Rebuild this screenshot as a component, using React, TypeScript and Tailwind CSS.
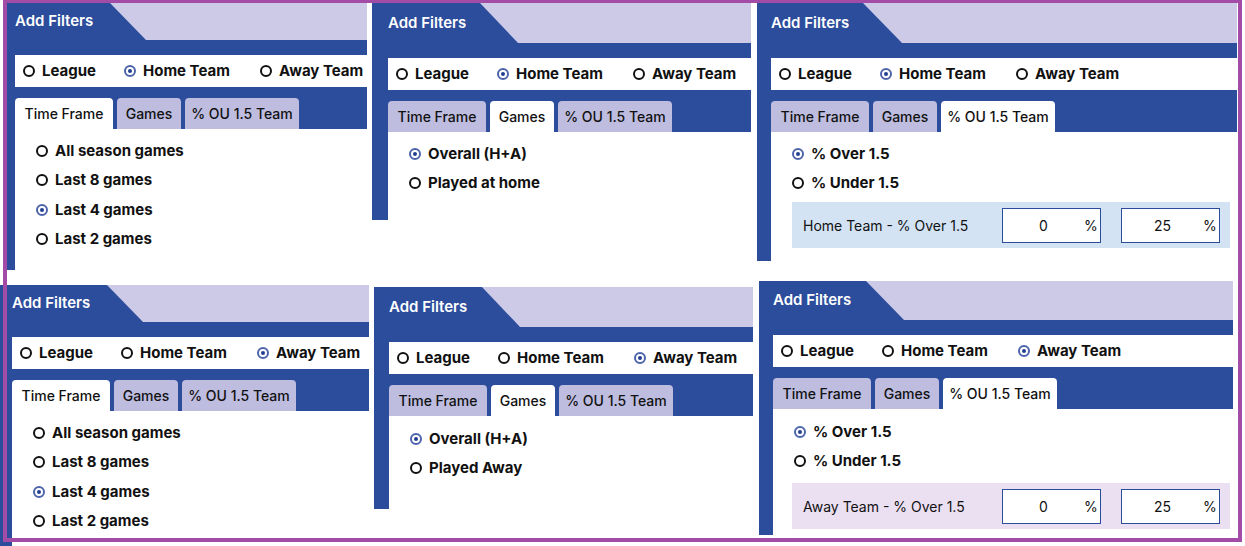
import React from "react";

type Team = "home" | "away";

type PanelConfig = {
  wrap: string;
  pad: string;
  headerH: string;
  tabShape: string;
  team: Team;
  activeTab: number;
  contentH: string;
  contentPt: string;
  options?: string[];
  bar?: { label: string; bg: string; mt: string; ml: string };
};

const TABS = [
  { label: "Time Frame", w: "w-[98px]" },
  { label: "Games", w: "w-[64px]" },
  { label: "% OU 1.5 Team", w: "w-[114px]" },
];

function Radio({ checked }: { checked?: boolean }) {
  if (checked) {
    return (
      <span className="flex h-[12px] w-[12px] shrink-0 items-center justify-center rounded-full border-2 border-[#4d64ad]">
        <span className="h-[4px] w-[4px] rounded-full bg-[#233f8f]" />
      </span>
    );
  }
  return (
    <span className="h-[12px] w-[12px] shrink-0 rounded-full border-2 border-[#111]" />
  );
}

function TeamRow({ team }: { team: Team }) {
  return (
    <div className="flex h-[32px] items-center bg-white pl-[8px] text-[15px] font-bold text-[#111]">
      <div className="flex w-[101px] items-center gap-[7px]">
        <Radio />
        <span>League</span>
      </div>
      <div className="flex w-[136px] items-center gap-[7px]">
        <Radio checked={team === "home"} />
        <span>Home Team</span>
      </div>
      <div className="flex items-center gap-[7px]">
        <Radio checked={team === "away"} />
        <span>Away Team</span>
      </div>
    </div>
  );
}

function PercentInput({ value }: { value: string }) {
  return (
    <div className="flex h-[35px] w-[99px] items-center border border-[#2c4c9c] bg-white text-[14px] text-[#111]">
      <span className="w-[81px] text-center">{value}</span>
      <span>%</span>
    </div>
  );
}

function Panel({ p }: { p: PanelConfig }) {
  return (
    <div className={`shrink-0 ${p.wrap}`}>
      {/* header with slanted tab */}
      <div className={`flex bg-[#cccae6] ${p.headerH}`}>
        <div
          className={`flex items-center bg-[#2c4c9c] text-[15px] font-semibold text-white ${p.pad} ${p.tabShape}`}
        >
          Add Filters
        </div>
      </div>

      <div className={`bg-[#2c4c9c] pt-[15px] ${p.pad}`}>
        <TeamRow team={p.team} />

        <div className="mt-[11px] flex gap-[4px]">
          {TABS.map((t, i) => (
            <div
              key={t.label}
              className={`flex h-[31px] items-center justify-center rounded-t-[4px] text-[14px] font-medium text-[#111] ${t.w} ${
                i === p.activeTab ? "bg-white" : "bg-[#bebde0]"
              }`}
            >
              {t.label}
            </div>
          ))}
        </div>

        <div className={`bg-white ${p.contentH} ${p.contentPt}`}>
          {p.options &&
            p.options.map((o, i) => (
              <div
                key={o}
                className="flex h-[29.5px] items-center gap-[7px] pl-[21px] text-[15px] font-bold text-[#111]"
              >
                <Radio checked={p.activeTab === 0 ? i === 2 : i === 0} />
                <span>{o}</span>
              </div>
            ))}

          {p.bar && (
            <div
              className={`flex h-[46px] w-[438px] items-center pl-[11px] pr-[10px] ${p.bar.bg} ${p.bar.mt} ${p.bar.ml}`}
            >
              <span className="text-[14px] text-[#111]">{p.bar.label}</span>
              <div className="ml-auto flex gap-[20px]">
                <PercentInput value="0" />
                <PercentInput value="25" />
              </div>
            </div>
          )}
        </div>
      </div>
    </div>
  );
}

const timeFrame = ["All season games", "Last 8 games", "Last 4 games", "Last 2 games"];
const ou = ["% Over 1.5", "% Under 1.5"];

const topRow: PanelConfig[] = [
  {
    wrap: "w-[360px]",
    pad: "pl-[8px]",
    headerH: "h-[37px]",
    tabShape: "w-[139px] [clip-path:polygon(0_0,103px_0,139px_100%,0_100%)]",
    team: "home",
    activeTab: 0,
    contentH: "h-[141px]",
    contentPt: "pt-[7px]",
    options: timeFrame,
  },
  {
    wrap: "ml-[5px] w-[379px]",
    pad: "pl-[16px]",
    headerH: "h-[40px]",
    tabShape: "w-[146px] [clip-path:polygon(0_0,108px_0,146px_100%,0_100%)]",
    team: "home",
    activeTab: 1,
    contentH: "h-[88px]",
    contentPt: "pt-[7px]",
    options: ["Overall (H+A)", "Played at home"],
  },
  {
    wrap: "ml-[6px] w-[480px]",
    pad: "pl-[14px]",
    headerH: "h-[40px]",
    tabShape: "w-[145px] [clip-path:polygon(0_0,106px_0,145px_100%,0_100%)]",
    team: "home",
    activeTab: 2,
    contentH: "h-[129px]",
    contentPt: "pt-[7px]",
    options: ou,
    bar: { label: "Home Team - % Over 1.5", bg: "bg-[#d3e3f4]", mt: "mt-[4px]", ml: "ml-[21px]" },
  },
];

const bottomRow: PanelConfig[] = [
  {
    wrap: "mt-[4px] w-[369px]",
    pad: "pl-[12px]",
    headerH: "h-[37px]",
    tabShape: "w-[143px] [clip-path:polygon(0_0,107px_0,143px_100%,0_100%)]",
    team: "away",
    activeTab: 0,
    contentH: "h-[140px]",
    contentPt: "pt-[7px]",
    options: timeFrame,
  },
  {
    wrap: "mt-[6px] ml-[5px] w-[379px]",
    pad: "pl-[15px]",
    headerH: "h-[40px]",
    tabShape: "w-[146px] [clip-path:polygon(0_0,108px_0,146px_100%,0_100%)]",
    team: "away",
    activeTab: 1,
    contentH: "h-[93px]",
    contentPt: "pt-[8px]",
    options: ["Overall (H+A)", "Played Away"],
  },
  {
    wrap: "ml-[6px] w-[474px]",
    pad: "pl-[14px]",
    headerH: "h-[39px]",
    tabShape: "w-[145px] [clip-path:polygon(0_0,107px_0,145px_100%,0_100%)]",
    team: "away",
    activeTab: 2,
    contentH: "h-[126px]",
    contentPt: "pt-[8px]",
    options: ou,
    bar: { label: "Away Team - % Over 1.5", bg: "bg-[#ebe0f1]", mt: "mt-[7px]", ml: "ml-[19px]" },
  },
];

export default function App() {
  return (
    <div
      className="relative h-[546px] w-[1245px] overflow-hidden bg-white"
      style={{ fontFamily: "Inter, 'Noto Sans', sans-serif" }}
    >
      <div className="flex h-[281px] items-start pl-[7px] pt-[3px]">
        {topRow.map((p, i) => (
          <Panel key={i} p={p} />
        ))}
      </div>
      <div className="flex items-start">
        {bottomRow.map((p, i) => (
          <Panel key={i} p={p} />
        ))}
      </div>

      {/* purple frame drawn over the collage */}
      <div className="pointer-events-none absolute left-[3px] top-[-1px] h-[543px] w-[1239px] border-4 border-[#a24ca7]" />
    </div>
  );
}
